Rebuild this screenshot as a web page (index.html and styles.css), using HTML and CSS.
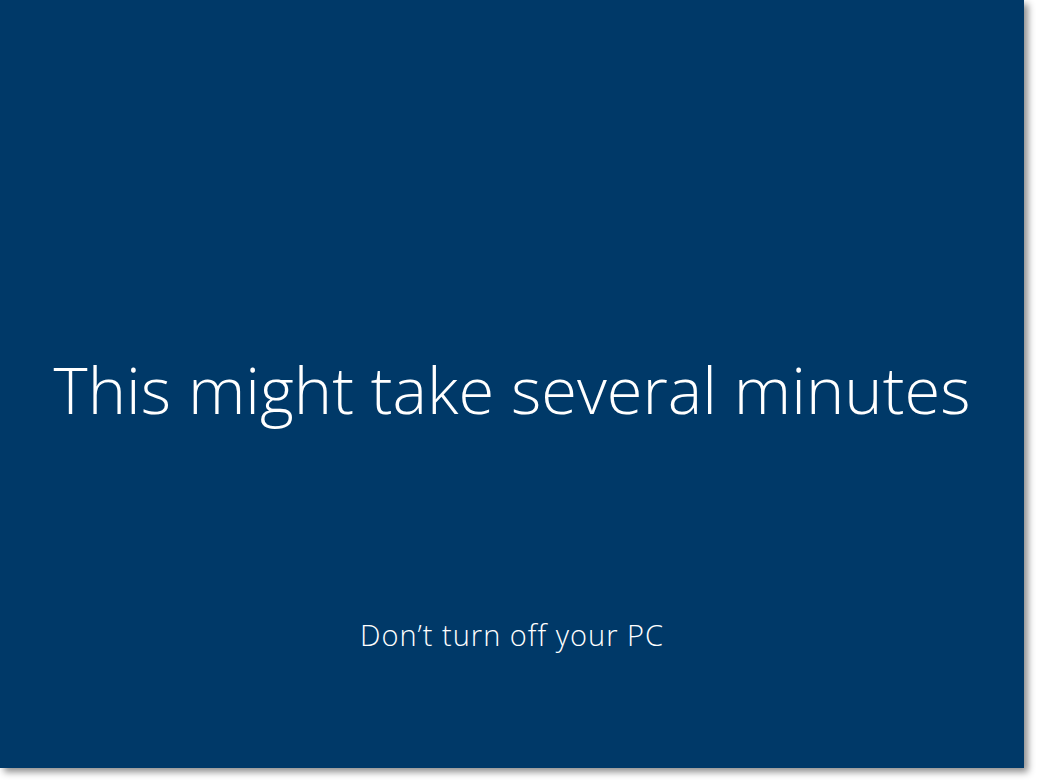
FILE: index.html
```html
<!DOCTYPE html>
<html lang="en">
<head>
<meta charset="utf-8">
<title>This might take several minutes</title>
<link rel="stylesheet" href="styles.css">
</head>
<body>
<div class="screen">
  <h1 class="title">This might take several minutes</h1>
  <p class="subtitle">Don’t turn off your PC</p>
</div>
</body>
</html>
```

FILE: styles.css
```css
html, body {
  margin: 0;
  padding: 0;
  background: #ffffff;
}
body {
  width: 1039px;
  height: 783px;
  overflow: hidden;
}
.screen {
  width: 1024px;
  height: 768px;
  background: #003968;
  box-shadow: 4px 4px 7px rgba(0, 0, 0, 0.45);
  display: flex;
  flex-direction: column;
  align-items: center;
  color: #ffffff;
  font-family: "Open Sans", "Noto Sans", sans-serif;
  font-weight: 300;
}
.title {
  margin: 344px 0 0 0;
  font-size: 65px;
  font-weight: 300;
  line-height: 90px;
  white-space: nowrap;
}
.subtitle {
  margin: 183px 0 0 0;
  font-size: 29px;
  font-weight: 300;
  line-height: 36px;
  letter-spacing: 1px;
  white-space: nowrap;
}
```
